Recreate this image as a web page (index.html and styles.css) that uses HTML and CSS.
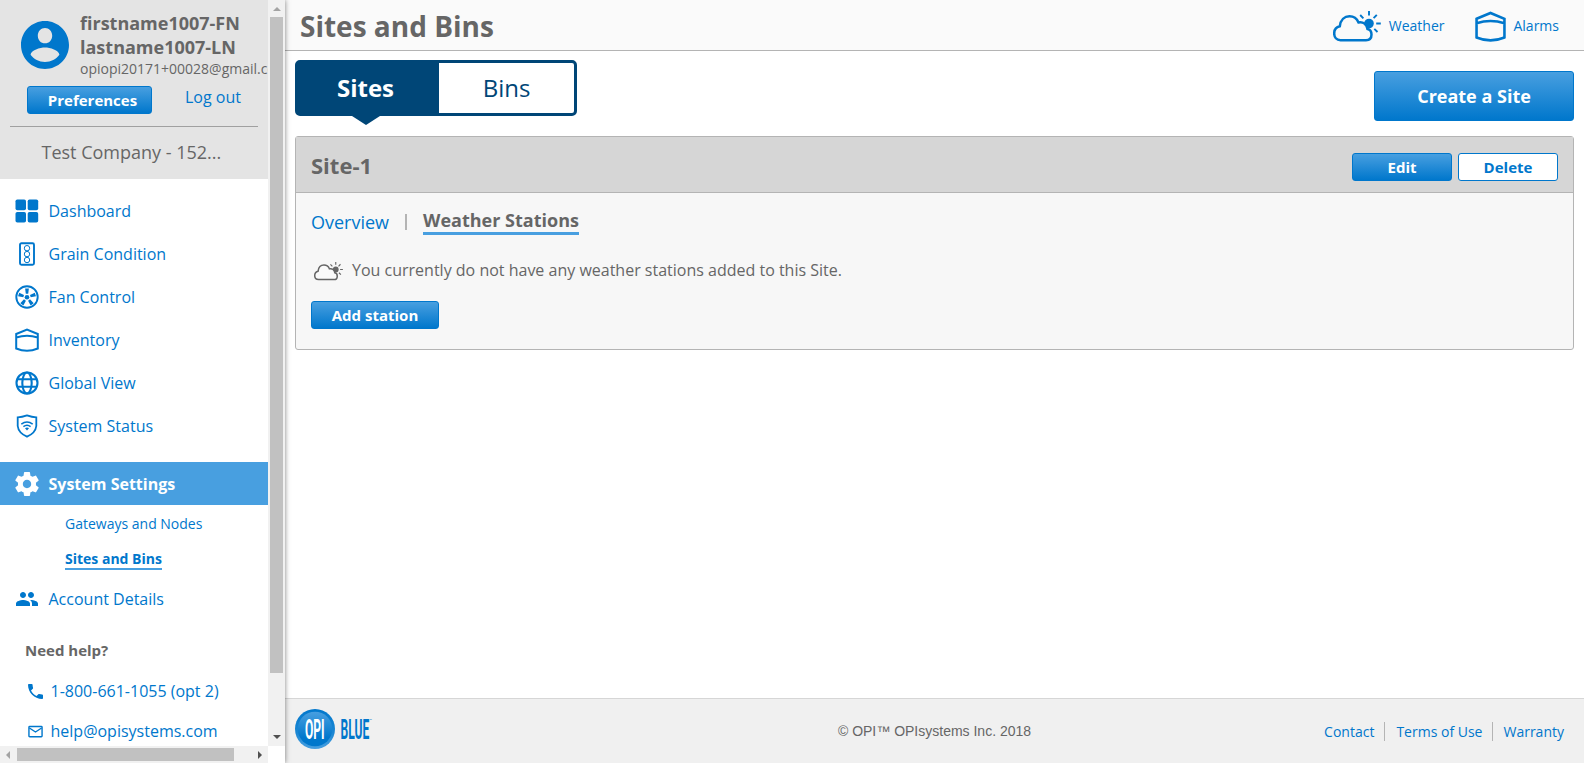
FILE: index.html
```html
<!DOCTYPE html>
<html lang="en">
<head>
<meta charset="utf-8">
<title>Sites and Bins</title>
<link rel="stylesheet" href="styles.css">
</head>
<body>
<svg class="defs" aria-hidden="true">
  <symbol id="bin" viewBox="0 0 24 24"><path d="M1.2 6 12 1.5 22.800 6V20.500Q12 25 1.200 20.500ZM1.200 9.500Q12 6 22.800 9.500" fill="none" stroke="currentColor" stroke-width="2"/></symbol>
  <symbol id="weather" viewBox="0 0 48 32">
    <circle cx="36" cy="13.500" r="4.800" fill="currentColor"/>
    <path d="M36 1v4.500M43.800 4.800l-3.200 3.400M47.800 13.500h-4.600M44.500 22l-3.200-3.100M27.200 5l3.200 3.300" stroke="currentColor" stroke-width="1.900" fill="none"/>
    <path class="cloud" d="M7.500 30.200C3.500 30.200 1.200 27 1.200 23.500C1.200 19.500 3.500 17 6.800 16.300C7.500 10 11.500 6.200 16.500 6.200C20.500 6.200 24 8.800 25.500 12.400C30 11.500 33.800 14 34.500 19C37 19.500 38.500 21.500 38.500 24.500C38.500 28 36.500 30.200 33 30.200Z" stroke="currentColor" stroke-width="2.500"/>
  </symbol>
</svg>

<aside class="sidebar">
  <div class="side-content">
    <div class="account">
      <div class="profile">
        <svg class="avatar" viewBox="2 2 20 20"><path fill="currentColor" d="M12 2C6.480 2 2 6.480 2 12s4.480 10 10 10 10-4.480 10-10S17.520 2 12 2zm0 2.900c1.700 0 3 1.400 3 3.200s-1.300 3.200-3 3.200-3-1.400-3-3.200 1.300-3.200 3-3.200zm0 14.200c-2.500 0-4.700-1.100-6-3 .03-2 4-3.080 6-3.080s5.970 1.080 6 3.080c-1.300 1.900-3.500 3-6 3z"/></svg>
        <div class="who">
          <div class="name">firstname1007-FN</div>
          <div class="name">lastname1007-LN</div>
          <div class="email">opiopi20171+00028@gmail.com</div>
        </div>
      </div>
      <div class="account-actions">
        <a class="btn prefs">Preferences</a>
        <a class="logout">Log out</a>
      </div>
      <div class="company">Test Company - 152...</div>
    </div>

    <nav class="nav">
      <a class="item"><svg viewBox="0 0 24 24" fill="currentColor"><rect x=".5" y=".5" width="10.500" height="10.800" rx="1.800"/><rect x="12.700" y=".5" width="10.500" height="10.800" rx="1.800"/><rect x=".5" y="13" width="10.500" height="10.500" rx="1.800"/><rect x="12.700" y="13" width="10.500" height="10.500" rx="1.800"/></svg>Dashboard</a>
      <a class="item"><svg viewBox="0 0 24 24" fill="none" stroke="currentColor"><rect x="5" y="1.200" width="14" height="21.600" rx="1.500" stroke-width="1.900"/><circle cx="12" cy="6.200" r="2.700"/><circle cx="12" cy="12.100" r="2.700"/><circle cx="12" cy="18" r="2.700"/></svg>Grain Condition</a>
      <a class="item"><svg viewBox="0 0 24 24"><circle cx="12" cy="12" r="10.700" fill="none" stroke="currentColor" stroke-width="1.900"/><circle cx="12" cy="12.200" r="2.300" fill="currentColor"/><g fill="currentColor"><path id="blade" d="M10.100 3.400h3.800L13.200 8.700h-2.400z"/><use href="#blade" transform="rotate(72 12 12.200)"/><use href="#blade" transform="rotate(144 12 12.200)"/><use href="#blade" transform="rotate(216 12 12.200)"/><use href="#blade" transform="rotate(288 12 12.200)"/></g></svg>Fan Control</a>
      <a class="item"><svg><use href="#bin"/></svg>Inventory</a>
      <a class="item"><svg viewBox="0 0 24 24" fill="none" stroke="currentColor" stroke-width="2.100"><circle cx="12" cy="12" r="10.500"/><ellipse cx="12" cy="12" rx="4.700" ry="10.500"/><path d="M2 8.300h20M2 15.700h20"/></svg>Global View</a>
      <a class="item"><svg viewBox="0 0 24 24" fill="none" stroke="currentColor" stroke-width="1.800"><path d="M12 1.400Q17 3.200 21.300 3.400V12Q20.500 19 12 22.700Q3.500 19 2.700 12V3.400Q7 3.200 12 1.400Z"/><path d="M6.300 10.200Q12 5.800 17.700 10.200M8.400 12.700Q12 10 15.600 12.700" stroke-width="1.500"/><path d="M10 14.200Q12 13 14 14.200L12 16.500Z" fill="currentColor" stroke="none"/></svg>System Status</a>
      <a class="item active"><svg viewBox="2 2 20 20"><path fill="currentColor" d="M19.430 12.980c.04-.32.070-.64.070-.98s-.03-.66-.07-.98l2.110-1.650c.19-.15.240-.42.120-.64l-2-3.460c-.12-.22-.39-.3-.61-.22l-2.490 1c-.52-.4-1.080-.73-1.690-.98l-.38-2.650C14.460 2.180 14.250 2 14 2h-4c-.25 0-.46.180-.49.420l-.38 2.650c-.61.250-1.170.59-1.690.98l-2.490-1c-.23-.09-.49 0-.61.220l-2 3.460c-.13.220-.07.490.12.640l2.110 1.650c-.04.320-.07.650-.07.980s.03.660.07.980l-2.110 1.650c-.19.150-.24.420-.12.640l2 3.460c.12.220.39.300.61.220l2.490-1c.52.400 1.080.730 1.690.980l.38 2.650c.03.240.24.420.49.420h4c.25 0 .46-.18.490-.42l.38-2.650c.61-.25 1.170-.59 1.690-.98l2.490 1c.23.090.49 0 .61-.22l2-3.460c.12-.22.070-.49-.12-.64l-2.110-1.650zM12 15.500c-1.930 0-3.500-1.570-3.500-3.500s1.570-3.500 3.500-3.500 3.500 1.570 3.500 3.500-1.570 3.500-3.500 3.500z"/></svg>System Settings</a>
      <a class="sub">Gateways and Nodes</a>
      <a class="sub current"><span>Sites and Bins</span></a>
      <a class="item details"><svg viewBox="0 0 24 24"><path fill="currentColor" d="M16 11c1.660 0 2.990-1.340 2.990-3S17.660 5 16 5s-3 1.340-3 3 1.340 3 3 3zm-8 0c1.660 0 2.990-1.340 2.990-3S9.660 5 8 5 5 6.340 5 8s1.340 3 3 3zm0 2c-2.330 0-7 1.170-7 3.500V19h14v-2.500C15 14.170 10.330 13 8 13zm8 0c-.29 0-.62.020-.97.050 1.160.840 1.970 1.970 1.970 3.450V19h6v-2.500c0-2.330-4.670-3.500-7-3.500z"/></svg>Account Details</a>
    </nav>

    <div class="help">
      <div class="help-title">Need help?</div>
      <a class="help-link"><svg viewBox="3 3 18 18"><path fill="currentColor" d="M6.620 10.790c1.440 2.830 3.760 5.140 6.590 6.590l2.200-2.200c.27-.27.670-.36 1.020-.24 1.120.370 2.330.570 3.570.570.550 0 1 .450 1 1V20c0 .550-.45 1-1 1-9.390 0-17-7.610-17-17 0-.55.450-1 1-1h3.500c.55 0 1 .450 1 1 0 1.250.200 2.450.570 3.570.110.350.030.740-.25 1.020l-2.200 2.200z"/></svg>1-800-661-1055 (opt 2)</a>
      <a class="help-link"><svg viewBox="0 0 16 16" fill="none" stroke="currentColor" stroke-width="1.500"><rect x="1" y="2.600" width="14" height="11" rx=".8"/><path d="M1.500 4.300 8 8.500l6.500-4.200"/></svg>help@opisystems.com</a>
    </div>
  </div>
  <div class="vscroll"><i class="arrow up"></i><i class="vthumb"></i><i class="arrow down"></i></div>
  <div class="hscroll"><i class="arrow left"></i><i class="hthumb"></i><i class="arrow right"></i></div>
</aside>

<main class="main">
  <header class="topbar">
    <h1>Sites and Bins</h1>
    <a class="toplink"><svg class="weather-icon"><use href="#weather"/></svg>Weather</a>
    <a class="toplink alarms"><svg class="bin-icon"><use href="#bin"/></svg>Alarms</a>
  </header>

  <div class="content">
    <div class="toolbar">
      <div class="tabs"><a class="tab selected">Sites</a><a class="tab">Bins</a></div>
      <a class="btn create">Create a Site</a>
    </div>
    <section class="panel">
      <div class="panel-head">
        <h2>Site-1</h2>
        <a class="btn small">Edit</a>
        <a class="btn small outline">Delete</a>
      </div>
      <div class="panel-body">
        <div class="subtabs"><a>Overview</a><i></i><b>Weather Stations</b></div>
        <p class="empty"><svg><use href="#weather"/></svg>You currently do not have any weather stations added to this Site.</p>
        <a class="btn add">Add station</a>
      </div>
    </section>
  </div>

  <footer class="footer">
    <svg class="logo" viewBox="0 0 84 42">
      <defs>
        <linearGradient id="face" x2="0" y2="1"><stop offset="0" stop-color="#489fe0"/><stop offset=".75" stop-color="#0077cc"/></linearGradient>
        <linearGradient id="rim" x2="0" y2="1"><stop offset="0" stop-color="#0077cc"/><stop offset=".6" stop-color="#1c87d3"/><stop offset="1" stop-color="#489fe0"/></linearGradient>
      </defs>
      <circle cx="20" cy="20" r="20" fill="url(#rim)"/>
      <circle cx="20" cy="20" r="17.300" fill="url(#face)"/>
      <g class="logo-text">
        <text transform="translate(10 30) scale(.43 1)" fill="#fff">OPI</text>
        <text transform="translate(45.500 30) scale(.43 1)" fill="#0077cc">BLUE</text>
      </g>
      <text class="tm" x="74.500" y="13" fill="#0077cc">™</text>
    </svg>
    <span class="copyright">© OPI™ OPIsystems Inc. 2018</span>
    <nav class="legal"><a>Contact</a><a>Terms of Use</a><a>Warranty</a></nav>
  </footer>
</main>
</body>
</html>
```
FILE: styles.css
```css
* { box-sizing: border-box; }
body {
  margin: 0;
  height: 763px;
  display: flex;
  overflow: hidden;
  background: #fff;
  color: #666;
  font-family: "Open Sans", sans-serif;
  font-size: 16px;
}
a { color: #0077cc; white-space: nowrap; }
svg { flex: none; }
.defs { position: absolute; width: 0; height: 0; }

/* Sidebar */
.sidebar {
  width: 285px;
  height: 763px;
  flex: none;
  display: grid;
  grid-template: 746px 17px / 268px 17px;
  background: #fff;
  box-shadow: 0 0 5px rgba(0, 0, 0, .5);
  z-index: 1;
}
.side-content { overflow: hidden; }
.account { height: 179px; background: #e4e4e4; padding-top: 11px; }
.profile { display: flex; height: 75px; padding-left: 21px; }
.avatar { width: 48px; height: 48px; margin: 10px 11px 0 0; color: #0077cc; }
.name { font-size: 18px; font-weight: 700; line-height: 24px; white-space: nowrap; }
.email { font-size: 14px; line-height: 20px; }
.account-actions {
  display: flex;
  height: 41px;
  margin: 0 10px;
  padding-left: 17px;
  border-bottom: 1px solid #a0a0a0;
}
.logout { margin-left: 33px; line-height: 22px; }
.company { padding-left: 41.5px; font-size: 18px; line-height: 51px; }
.btn {
  display: flex;
  align-items: center;
  justify-content: center;
  border: 1px solid #0077cc;
  border-radius: 3px;
  background: linear-gradient(#489fe0, #0077cc);
  color: #fff;
  font-size: 15px;
  font-weight: 700;
}
.prefs { width: 125px; height: 28px; padding-left: 6px; }

.nav { padding-top: 10px; }
.item { display: flex; align-items: center; height: 43px; padding: 0 0 0 15px; }
.item svg { width: 24px; height: 24px; margin-right: 9.5px; }
.item.active { margin-top: 15px; background: #489fe0; color: #fff; font-weight: 700; }
.sub { display: block; height: 35px; padding: 2px 0 0 65px; font-size: 14px; line-height: 34px; }
.current { font-weight: 700; }
.current span { display: inline-block; height: 28px; border-bottom: 2px solid #489fe0; }
.details { margin-top: 2px; }
.help { padding-left: 25px; }
.help-title { padding-top: 16px; height: 51px; font-size: 15px; font-weight: 700; line-height: 28px; }
.help-link { display: flex; align-items: center; height: 40px; padding-left: 3px; }
.help-link svg { width: 15px; height: 15px; margin: 1px 7.5px 0 0; }

/* Scrollbars */
.vscroll, .hscroll { display: flex; align-items: center; background: #f1f1f1; }
.vscroll { flex-direction: column; }
.vthumb { width: 13px; height: 656px; background: #c1c1c1; }
.hthumb { width: 217px; height: 13px; background: #c1c1c1; }
.arrow { border: 4px solid transparent; }
.up { height: 8px; margin: 3px 0 6px; border-bottom-color: #a3a3a3; }
.down { margin: auto 0 3px; border-top-color: #505050; }
.left { margin: 0 7px 0 2px; border-right-color: #a3a3a3; }
.right { margin: 0 2px 0 auto; border-left-color: #505050; }

/* Main column */
.main { flex: 1; display: flex; flex-direction: column; min-width: 0; }
.topbar {
  display: flex;
  align-items: center;
  height: 51px;
  padding: 0 25px 0 15px;
  background: #fafafa;
  border-bottom: 1px solid #b4b4b4;
}
h1 { margin: 0 auto 0 0; padding-top: 2px; font-size: 28px; line-height: 50px; }
.toplink { display: flex; align-items: center; font-size: 14px; }
.weather-icon { width: 48px; height: 32px; margin: 2px 7.5px 0 0; }
.bin-icon { width: 31px; height: 31px; margin: 3px 7px 0 0; }
.alarms { margin-left: 31px; }
.cloud { fill: #fafafa; }
.content { flex: 1; padding: 9px 10px 0; }
.toolbar { display: flex; justify-content: space-between; height: 76px; }
.tabs {
  display: flex;
  width: 282px;
  height: 56px;
  border: 3px solid #004677;
  border-radius: 5px;
}
.tab {
  position: relative;
  width: 135px;
  color: #004677;
  font-size: 24px;
  line-height: 50px;
  text-align: center;
}
.selected { width: 141px; padding-right: 6px; background: #004677; color: #fff; font-weight: 700; }
.selected::after {
  content: "";
  position: absolute;
  top: 53px;
  left: 54px;
  border: 14px solid transparent;
  border-width: 9px 14px 0;
  border-top-color: #004677;
}
.create { width: 200px; height: 50px; margin-top: 11px; font-size: 18px; }
.panel { height: 214px; border: 1px solid #b4b4b4; border-radius: 3px; background: #f7f7f7; }
.panel-head {
  display: flex;
  height: 56px;
  padding: 16px 15px 0;
  gap: 6px;
  background: #d6d6d6;
  border-bottom: 1px solid #b4b4b4;
}
h2 { margin: 0 auto 0 0; font-size: 22px; line-height: 24px; }
.small { width: 100px; height: 28px; }
.outline { background: #fff; color: #0077cc; }
.panel-body { padding: 13px 15px 0; }
.subtabs { display: flex; font-size: 18px; height: 31px; line-height: 33px; }
.subtabs i { width: 2px; height: 16px; margin: 8px 16px 0; background: #b4b4b4; }
.subtabs b { line-height: 28px; height: 29px; border-bottom: 3px solid #489fe0; }
.empty { display: flex; align-items: center; margin: 18px 0 17px; padding-left: 3px; height: 29px; }
.empty svg { width: 29px; height: 20px; margin: 2px 9px 0 0; }
.empty .cloud { fill: #f7f7f7; }
.add { width: 128px; height: 28px; }

.footer {
  display: grid;
  grid-template-columns: 1fr auto 1fr;
  align-items: start;
  height: 65px;
  padding: 10px 20px 0 10px;
  background: #f0f0f0;
  border-top: 1px solid #d6d6d6;
}
.logo { width: 84px; height: 42px; }
.logo-text { font: 700 28px Roboto, sans-serif; }
.tm { font: 4px Roboto, sans-serif; }
.copyright { padding-left: 10px; font: 14px/44px "Liberation Sans", Arial, sans-serif; }
.legal { display: flex; justify-content: flex-end; padding-top: 13px; font-size: 14px; line-height: 19px; }
.legal a + a { margin-left: 10px; padding-left: 11px; border-left: 1px solid #b4b4b4; }
.legal a:last-child { padding-left: 10px; }
```
